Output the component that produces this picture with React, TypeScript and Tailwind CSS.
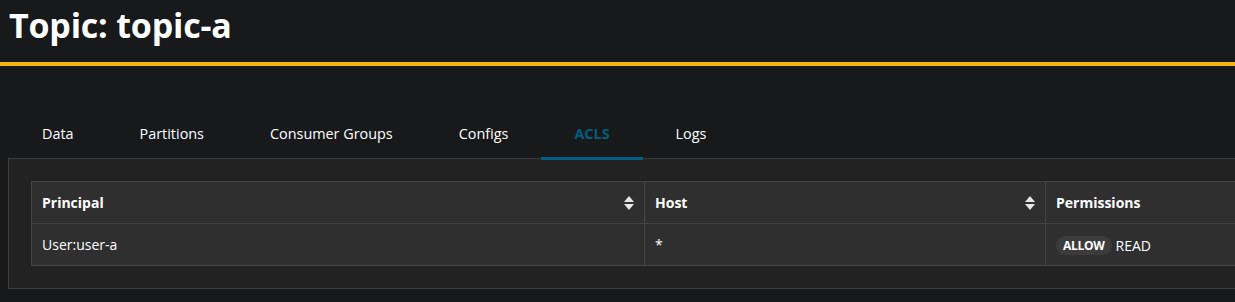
const TABS = ["Data", "Partitions", "Consumer Groups", "Configs", "ACLS", "Logs"];

function SortIcon() {
  return (
    <svg width="10" height="14" viewBox="0 0 10 14" className="shrink-0">
      <path d="M5 0 L10 6 H0 Z" fill="#e6e6e6" />
      <path d="M5 14 L10 8 H0 Z" fill="#e6e6e6" />
    </svg>
  );
}

export default function App() {
  return (
    <div
      className="w-[1235px] h-[302px] overflow-hidden bg-[#18191b] text-white"
      style={{ fontFamily: '"Open Sans", "Noto Sans", sans-serif' }}
    >
      {/* Header */}
      <div className="h-[62px] pl-[9px] pt-[2px]">
        <h1 className="text-[34px] font-bold leading-[46px] tracking-[-0.2px]">Topic: topic-a</h1>
      </div>
      <div className="h-[4px] bg-[#f0b90b]" />

      {/* Tabs */}
      <div className="pt-[44px] pl-[9px] flex relative z-10">
        {TABS.map((t) => {
          const active = t === "ACLS";
          return (
            <div
              key={t}
              className={
                "px-[33px] h-[50px] flex items-center text-[14.4px] border-b-[3px] " +
                (active
                  ? "border-[#005f80] text-[#005f80] font-bold"
                  : "border-transparent text-white")
              }
            >
              {t}
            </div>
          );
        })}
      </div>

      {/* Panel */}
      <div className="ml-[8px] -mt-[2px] h-[131px] border border-r-0 border-[#3d3d3d] bg-[#222222] pl-[22px] pt-[22px]">
        <table className="table-fixed w-[1300px] border-collapse bg-[#2f2f2f] text-[14px]">
          <colgroup>
            <col className="w-[613px]" />
            <col className="w-[401px]" />
            <col />
          </colgroup>
          <thead>
            <tr className="h-[42px]">
              <th className="border border-[#444] px-[10px] text-left font-bold">
                <div className="flex items-center justify-between">
                  <span>Principal</span>
                  <SortIcon />
                </div>
              </th>
              <th className="border border-[#444] px-[10px] text-left font-bold">
                <div className="flex items-center justify-between">
                  <span>Host</span>
                  <SortIcon />
                </div>
              </th>
              <th className="border border-[#444] border-r-0 px-[10px] text-left font-bold">
                Permissions
              </th>
            </tr>
          </thead>
          <tbody>
            <tr className="h-[42px]">
              <td className="border border-[#444] px-[10px]">User:user-a</td>
              <td className="border border-[#444] px-[10px]">*</td>
              <td className="border border-[#444] border-r-0 px-[10px]">
                <span className="inline-flex items-center gap-[4px]">
                  <span className="rounded-full bg-[#3c3c3c] px-[7px] py-[2px] text-[12px] font-bold leading-[15px] tracking-[-0.3px]">
                    ALLOW
                  </span>
                  <span>READ</span>
                </span>
              </td>
            </tr>
          </tbody>
        </table>
      </div>
    </div>
  );
}
